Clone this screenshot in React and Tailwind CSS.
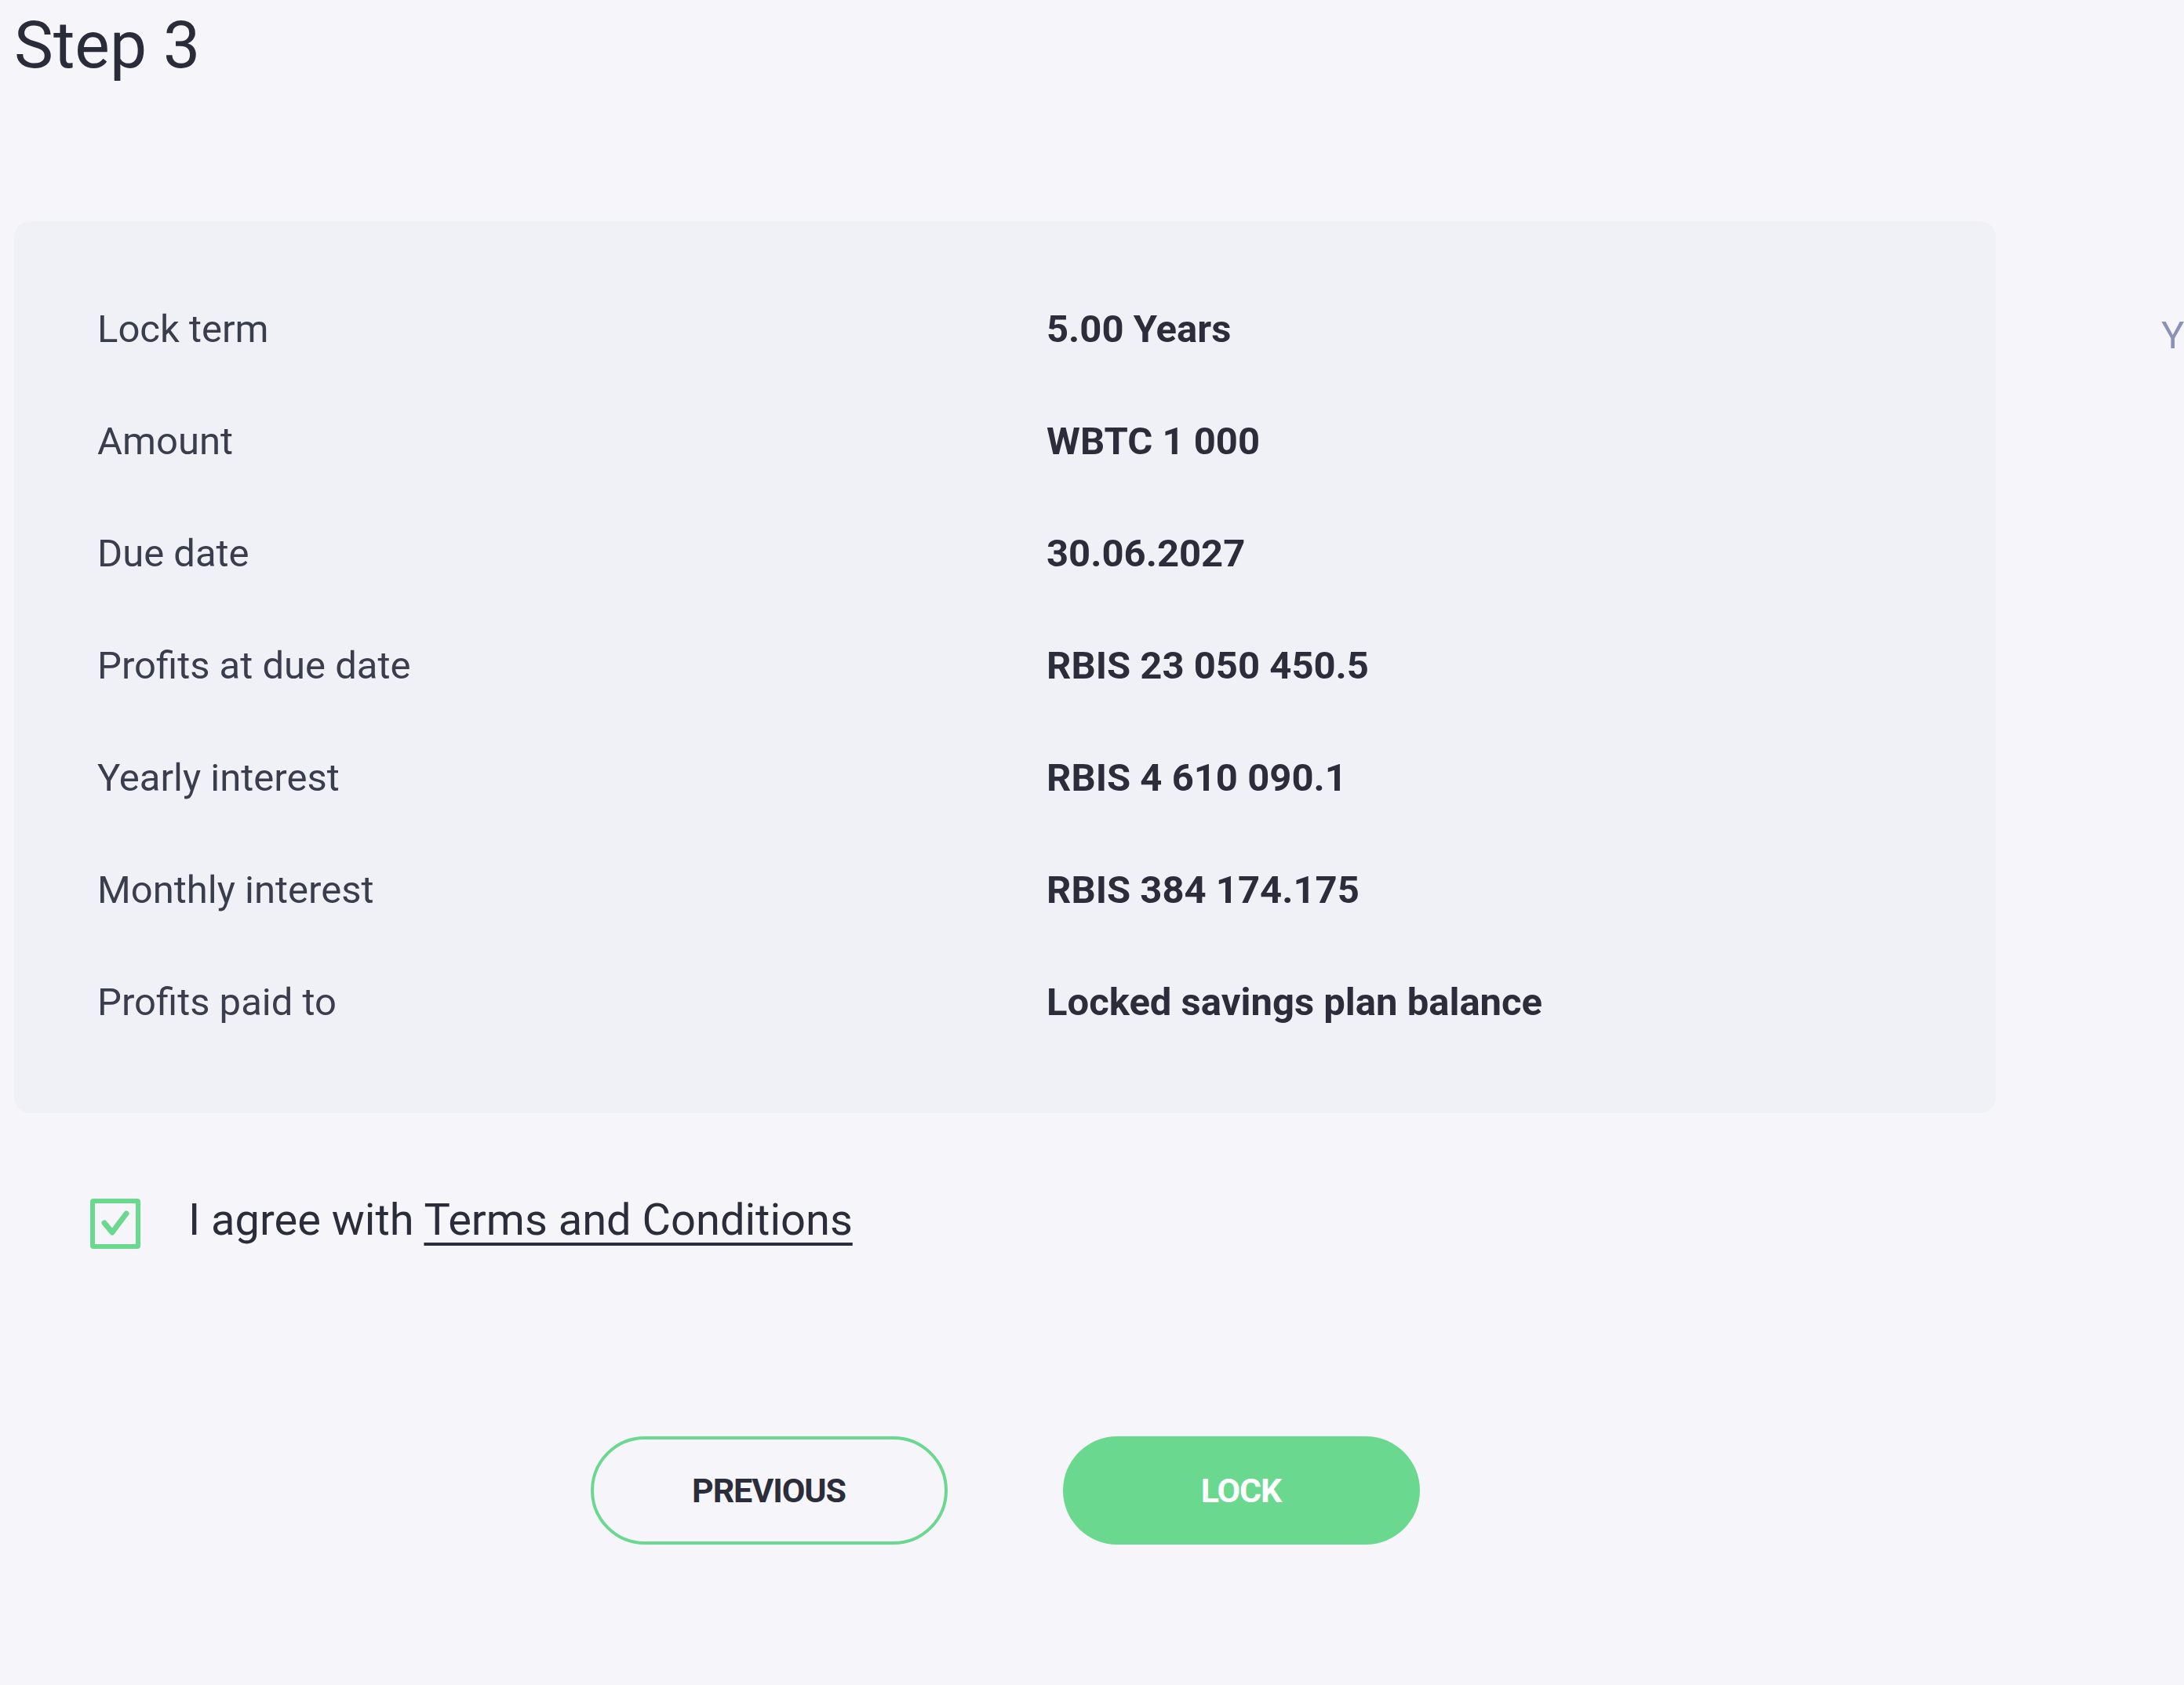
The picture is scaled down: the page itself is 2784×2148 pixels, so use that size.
export default function App() {
  const rows = [
    ["Lock term", "5.00 Years"],
    ["Amount", "WBTC 1 000"],
    ["Due date", "30.06.2027"],
    ["Profits at due date", "RBIS 23 050 450.5"],
    ["Yearly interest", "RBIS 4 610 090.1"],
    ["Monthly interest", "RBIS 384 174.175"],
    ["Profits paid to", "Locked savings plan balance"],
  ];
  return (
    <div className="w-[2784px] h-[2148px] overflow-hidden bg-[#f6f6fa] font-['Roboto',sans-serif] text-[#2b2e3a] flex">
      <div className="w-[2526px] shrink-0 ml-[18px] flex flex-col">
        <h1 className="text-[84px] leading-none font-normal mt-[16px] text-[#2a2d39]">Step 3</h1>
        <div className="mt-[182px] bg-[#f0f1f7] rounded-[20px] pt-[66px] pb-[70px] pl-[106px]">
          {rows.map(([l, v]) => (
            <div key={l} className="grid grid-cols-[1210px_1fr] h-[143px] items-center">
              <div className="text-[49px] text-[#3a3e4c]">{l}</div>
              <div className="text-[49px] font-bold text-[#2b2e3a]">{v}</div>
            </div>
          ))}
        </div>
        <div className="flex items-center mt-[104px] ml-[97px]">
          <div className="w-[64px] h-[64px] translate-y-[5px] border-[6px] border-[#6bd88f] rounded-[4px] flex items-center justify-center">
            <svg width="44" height="44" viewBox="0 0 44 44">
              <path d="M8 21 L18 33 L36 9" fill="none" stroke="#6bd88f" strokeWidth="7" strokeLinecap="round" strokeLinejoin="round" />
            </svg>
          </div>
          <div className="ml-[61px] text-[56px] text-[#2b2e3a] leading-none">
            I agree with <span className="underline decoration-[4px] underline-offset-[10px]">Terms and Conditions</span>
          </div>
        </div>
        <div className="flex justify-center gap-[147px] mt-[244px]">
          <button className="w-[455px] h-[138px] rounded-full border-[4px] border-[#6bd88f] bg-transparent text-[43px] font-bold text-[#2b2e3a] tracking-tight">PREVIOUS</button>
          <button className="w-[455px] h-[138px] rounded-full bg-[#6bd88f] text-[43px] font-bold text-white tracking-tight">LOCK</button>
        </div>
      </div>
      <div className="ml-[211px] mt-[391px] text-[49px] text-[#8b93b5] whitespace-nowrap">Your</div>
    </div>
  );
}
